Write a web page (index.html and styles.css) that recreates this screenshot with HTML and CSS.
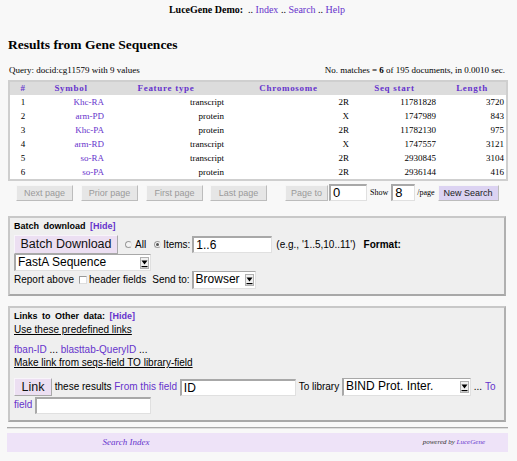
FILE: index.html
```html
<!DOCTYPE html>
<html>
<head>
<meta charset="utf-8">
<title>LuceGene Results</title>
<link rel="stylesheet" href="styles.css">
</head>
<body>
<div class="topnav"><b>LuceGene Demo:</b>&nbsp; .. <a href="#">Index</a> .. <a href="#">Search</a> .. <a href="#">Help</a></div>

<h2 class="title">Results from Gene Sequences</h2>

<div class="query">
  <span>Query: docid:cg11579 with 9 values</span>
  <span>No. matches = <b>6</b> of 195 documents, in 0.0010 sec.</span>
</div>

<table class="results">
  <colgroup>
    <col class="c-num"><col class="c-sym"><col class="c-feat"><col class="c-chr"><col class="c-seq"><col class="c-len">
  </colgroup>
  <thead>
    <tr><th>#</th><th>Symbol</th><th>Feature type</th><th>Chromosome</th><th>Seq start</th><th>Length</th></tr>
  </thead>
  <tbody>
    <tr><td class="num">1</td><td><a href="#">Khc-RA</a></td><td>transcript</td><td>2R</td><td>11781828</td><td>3720</td></tr>
    <tr><td class="num">2</td><td><a href="#">arm-PD</a></td><td>protein</td><td>X</td><td>1747989</td><td>843</td></tr>
    <tr><td class="num">3</td><td><a href="#">Khc-PA</a></td><td>protein</td><td>2R</td><td>11782130</td><td>975</td></tr>
    <tr><td class="num">4</td><td><a href="#">arm-RD</a></td><td>transcript</td><td>X</td><td>1747557</td><td>3121</td></tr>
    <tr><td class="num">5</td><td><a href="#">so-RA</a></td><td>transcript</td><td>2R</td><td>2930845</td><td>3104</td></tr>
    <tr><td class="num">6</td><td><a href="#">so-PA</a></td><td>protein</td><td>2R</td><td>2936144</td><td>416</td></tr>
  </tbody>
</table>

<div class="pager">
  <button class="pbtn">Next page</button>
  <button class="pbtn">Prior page</button>
  <button class="pbtn first">First page</button>
  <button class="pbtn last">Last page</button>
  <button class="pbtn pageto">Page to</button>
  <span class="tin pin-page">0</span>
  <span class="small show">Show</span>
  <span class="tin pin-show">8</span>
  <span class="small perpage">/page</span>
  <button class="newsearch">New Search</button>
</div>

<div class="box batch">
  <div class="box-title">Batch download <a href="#">[Hide]</a></div>
  <div class="row row1">
    <button class="lbtn">Batch Download</button>
    <span class="radio r-all"></span><span class="lbl-all">All</span>
    <span class="radio on r-items"></span><span class="lbl-items">Items:</span>
    <span class="tin items">1..6</span>
    <span class="eg">(e.g., '1..5,10..11')</span>
    <b class="fmt">Format:</b>
  </div>
  <div class="row">
    <span class="sel sel-fasta"><span>FastA Sequence</span><span class="arr"><svg viewBox="0 0 7 9" width="7" height="9"><path d="M0.5 1.5 L6.5 1.5 L3.5 5.5 Z" fill="#000"/><rect x="0.5" y="7" width="6" height="1.2" fill="#000"/></svg></span></span>
  </div>
  <div class="row row3">
    <span>Report above</span>
    <span class="check"></span>
    <span>header fields</span>
    <span class="sendto">Send to:</span>
    <span class="sel sel-browser"><span>Browser</span><span class="arr"><svg viewBox="0 0 7 9" width="7" height="9"><path d="M0.5 1.5 L6.5 1.5 L3.5 5.5 Z" fill="#000"/><rect x="0.5" y="7" width="6" height="1.2" fill="#000"/></svg></span></span>
  </div>
</div>

<div class="box links">
  <div class="box-title">Links to Other data: <a href="#">[Hide]</a></div>
  <div class="uline p-use">Use these predefined links</div>
  <div class="p-fban"><a href="#">fban-ID</a> <span>...</span> <a href="#">blasttab-QueryID</a> <span>...</span></div>
  <div class="uline">Make link from seqs-field TO library-field</div>
  <div class="linkrow"><button class="lbtn linkbtn">Link</button> <span>these results</span> <a href="#">From this field</a> <span class="tin lin">ID</span> <span>To library</span> <span class="sel sel-bind"><span>BIND Prot. Inter.</span><span class="arr"><svg viewBox="0 0 7 9" width="7" height="9"><path d="M0.5 1.5 L6.5 1.5 L3.5 5.5 Z" fill="#000"/><rect x="0.5" y="7" width="6" height="1.2" fill="#000"/></svg></span></span> <span>...</span> <a href="#">To</a> <a href="#">field</a> <span class="tin lin2"></span></div>
</div>

<div class="rule"></div>
<div class="footer">
  <div class="f-left"><a href="#">Search Index</a></div>
  <div class="f-right"><span>powered by</span> <a href="#">LuceGene</a></div>
</div>
</body>
</html>
```

FILE: styles.css
```css
* { box-sizing: border-box; }
html, body { background: #f8f8f8; }
body {
  margin: 0;
  padding: 4px 11px 0 8px;
  width: 517px;
  font-family: "Liberation Serif", serif;
  color: #000;
}
a { color: #6633cc; text-decoration: none; }

.topnav { text-align: center; font-size: 10px; line-height: 12px; }

.title {
  font-size: 13.5px;
  font-weight: bold;
  line-height: 16px;
  margin: 21px 0 0;
}

.query {
  display: flex;
  justify-content: space-between;
  font-size: 9px;
  line-height: 11px;
  margin-top: 12px;
  padding: 0 1px;
}

.results {
  width: 498px;
  table-layout: fixed;
  border-collapse: collapse;
  border: 2px solid #cfcfcf;
  background: #fff;
  margin-top: 4px;
  font-size: 9px;
}
.c-num { width: 27px; }
.c-sym { width: 70px; }
.c-feat { width: 120px; }
.c-chr { width: 125px; }
.c-seq { width: 87px; }
.c-len { width: 69px; }
.results th {
  background: #dcdcdc;
  color: #6633cc;
  font-weight: bold;
  letter-spacing: 0.7px;
  height: 13px;
  line-height: 13px;
  padding: 0;
  text-align: center;
}
.results td {
  height: 14px;
  line-height: 14px;
  padding: 0 2px 0 0;
  text-align: right;
}
.results td.num { text-align: center; padding: 0; }

.pager {
  display: flex;
  align-items: center;
  height: 17px;
  margin-top: 3px;
  padding-left: 8px;
}
.pbtn, .newsearch {
  font: 9px/14px "Liberation Sans", sans-serif;
  color: #9a9a9a;
  background: #e6e6e6;
  border: 1px solid;
  border-color: #f6f6f6 #bcbcbc #bcbcbc #f6f6f6;
  height: 16px;
  width: 57px;
  padding: 0;
  margin: 0 8px 0 0;
}
.pbtn.first { margin-right: 7px; }
.pbtn.last { margin-right: 18px; }
.pbtn.pageto { width: 43px; margin-right: 1px; }
.newsearch {
  width: 61px;
  color: #222;
  background: #dcd3f2;
  margin: 0;
}
.tin {
  display: inline-block;
  background: #fff;
  border: 1px solid #e0e0e0;
  border-top: 2px solid #a8a8a8;
  border-left: 2px solid #a8a8a8;
  font: 12px/14px "Liberation Sans", sans-serif;
  padding: 0 2px;
  height: 17px;
  vertical-align: middle;
}
.pin-page { width: 38px; font-size: 13px; }
.pin-show { width: 24px; font-size: 13px; }
.small { font-size: 8px; }
.show { margin: 0 3px 0 3px; }
.perpage { margin: 0 3px 0 2px; }

.box {
  border: 2px solid;
  border-color: #c8c8c8 #b0b0b0 #a8a8a8 #c8c8c8;
  background: #efefef;
  padding: 3px 4px 5px;
  font: 10px/12px "Liberation Sans", sans-serif;
}
.batch { margin-top: 15px; }
.box-title {
  font-size: 9px;
  font-weight: bold;
  line-height: 11px;
  word-spacing: 2px;
}

.row { display: flex; align-items: center; }
.row1 { margin-top: 3px; height: 19px; }
.lbtn {
  font: 12.5px/15px "Liberation Sans", sans-serif;
  color: #111;
  background: #ecdff2;
  border: 1px solid;
  border-color: #f8f4fa #a9a9a9 #a9a9a9 #f8f4fa;
  padding: 1px 0;
  height: 19px;
  width: 104px;
  margin: 0;
}
.radio {
  display: inline-block;
  width: 7px;
  height: 7px;
  border-radius: 50%;
  border: 1px solid #9c9c9c;
  border-right-color: #e4e4e4;
  background: #f4f4f4;
  position: relative;
}
.radio.on::after {
  content: "";
  position: absolute;
  left: 1px; top: 1px;
  width: 3px; height: 3px;
  border-radius: 50%;
  background: #555;
}
.r-all { margin-left: 7px; }
.lbl-all { margin-left: 3px; }
.r-items { margin-left: 8px; }
.lbl-items { margin-left: 2px; }
.items { width: 80px; margin-left: 2px; }
.eg { margin-left: 4px; }
.fmt { margin-left: 8px; }

.sel {
  display: inline-block;
  position: relative;
  background: #fff;
  border: 1px solid #e0e0e0;
  border-top: 1px solid #a8a8a8;
  border-left: 2px solid #a8a8a8;
  font: 12px/15px "Liberation Sans", sans-serif;
  padding: 0 2px;
  height: 17px;
  vertical-align: middle;
}
.sel .arr {
  position: absolute;
  right: 1px;
  top: 2px;
  width: 9px;
  height: 12px;
  background: #f0f0f0;
  border: 1px solid #b0b0b0;
  display: flex;
  align-items: center;
  justify-content: center;
}
.sel .arr svg { display: block; }
.sel-fasta { width: 137px; }
.row3 { height: 18px; }
.check {
  display: inline-block;
  width: 8px;
  height: 8px;
  background: #fff;
  border: 1px solid #ddd;
  border-top-color: #999;
  border-left-color: #999;
  margin: 0 2px 0 5px;
}
.sendto { margin-left: 6px; }
.sel-browser { width: 64px; height: 18px; margin-left: 2px; }

.links { margin-top: 10px; padding-bottom: 5px; }
.uline { text-decoration: underline; line-height: 13px; }
.p-use { margin-top: 1px; }
.p-fban { margin-top: 7px; line-height: 13px; }
.linkrow { margin-top: 9px; line-height: 18px; }
.linkrow > * { vertical-align: middle; }
.linkbtn { width: 38px; height: 18px; padding: 0; }
.lin { width: 116px; }
.lin2 { width: 116px; }
.sel-bind { width: 129px; height: 18px; }

.rule {
  margin: 5px -2px 0 -1px;
  border-top: 1px solid #a8a8a8;
  border-bottom: 1px solid #dedede;
}
.footer {
  display: grid;
  grid-template-columns: 238px 1fr;
  align-items: center;
  height: 19px;
  margin: 4px -2px 0 -1px;
  background: #eee3f8;
  font-style: italic;
}
.f-left { text-align: center; font-size: 9px; }
.f-right { text-align: right; font-size: 7px; color: #333; padding-right: 23px; }
```
